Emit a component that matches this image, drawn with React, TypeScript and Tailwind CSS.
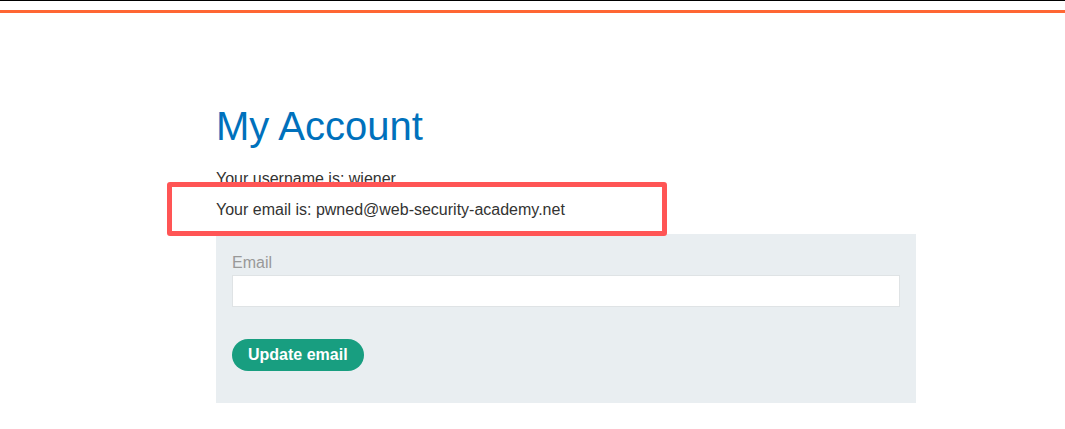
export default function App() {
  return (
    <div className="relative min-h-[429px] w-full bg-white font-['Liberation_Sans',Arial,sans-serif] text-[#333332]">
      {/* header strip */}
      <div className="h-px bg-black" />
      <div className="mt-[9px] h-[3px] bg-[#ff6633]" />

      <div className="ml-[216px] w-[700px] pt-[90px]">
        <h1 className="text-[40px] leading-[46px] text-[#0071bc]">My Account</h1>
        <p className="mt-[14px] text-[16px] leading-[31px]">Your username is: wiener</p>
        <p className="text-[16px] leading-[31px]">Your email is: pwned@web-security-academy.net</p>

        <form className="mt-[9px] bg-[#e9eef1] px-4 pt-[20px] pb-[32px]" onSubmit={(e) => e.preventDefault()}>
          <label className="block text-[16px] leading-[18px] text-[#999999]">Email</label>
          <input
            type="email"
            className="mt-[3px] block h-[32px] w-full border border-[#dfe3e5] bg-white px-2 text-[16px] outline-none"
          />
          <button
            type="submit"
            className="mt-[32px] h-[32px] rounded-full bg-[#189e80] px-4 text-[16px] font-bold text-white"
          >
            Update email
          </button>
        </form>
      </div>

      {/* annotation highlight */}
      <div className="absolute left-[167px] top-[182px] h-[54px] w-[500px] rounded-[3px] border-[5px] border-[#ff5555]" />
    </div>
  );
}
